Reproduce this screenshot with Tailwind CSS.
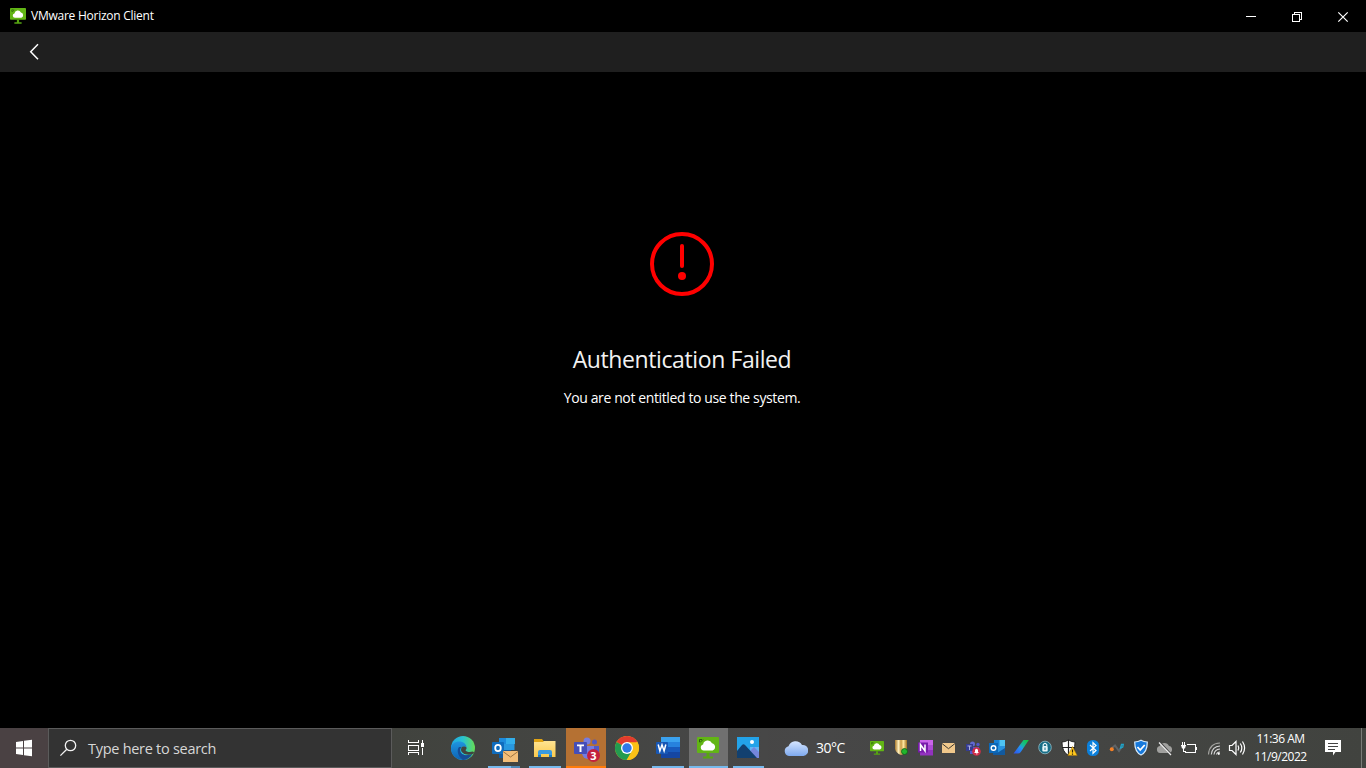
<!DOCTYPE html>
<html lang="en">
<head>
<meta charset="utf-8">
<title>VMware Horizon Client</title>
<script src="https://cdn.jsdelivr.net/npm/@tailwindcss/browser@4"></script>
</head>
<body class="flex h-screen w-screen flex-col overflow-hidden bg-black font-['Open_Sans','Noto_Sans',sans-serif] text-white">
<svg class="absolute size-0">
  <defs>
    <linearGradient id="edgeA" x1="0" y1="0" x2="1" y2="0"><stop offset="0" stop-color="#20a5e4"/><stop offset=".5" stop-color="#29c3d0"/><stop offset="1" stop-color="#66dc54"/></linearGradient>
    <linearGradient id="edgeB" x1="0" y1="0" x2="0" y2="1"><stop offset="0" stop-color="#1f95df"/><stop offset="1" stop-color="#0d62b4"/></linearGradient>
    <linearGradient id="folder" x1="0" y1="0" x2="0" y2="1"><stop offset="0" stop-color="#ffe493"/><stop offset="1" stop-color="#fbc94c"/></linearGradient>
    <linearGradient id="cloud" x1="0" y1="0" x2="0" y2="1"><stop offset="0" stop-color="#d5e5ff"/><stop offset="1" stop-color="#7ea9ee"/></linearGradient>
    <linearGradient id="pen" x1="1" y1="0" x2="0" y2="1"><stop offset="0" stop-color="#12c832"/><stop offset=".4" stop-color="#18b7a0"/><stop offset=".55" stop-color="#2494f4"/><stop offset="1" stop-color="#2f50ec"/></linearGradient>
    <linearGradient id="gold" x1="0" y1="0" x2="1" y2="0"><stop offset="0" stop-color="#a97a2d"/><stop offset=".3" stop-color="#fff0bd"/><stop offset=".5" stop-color="#c79a45"/><stop offset=".7" stop-color="#ffe6a0"/><stop offset="1" stop-color="#a0701f"/></linearGradient>
    <symbol id="horizon" viewBox="0 0 22 22">
      <path fill="#62b515" d="M1 0h20q1 0 1 1v14q0 1-1 1H1q-1 0-1-1V1q0-1 1-1z"/>
      <path fill="#57a512" d="M9.500 16h3v4h-3zM6 19.500h10v2H6z"/>
      <path fill="none" stroke="#28620b" d="M2.500 5V2.500H5M3 5.500l3-3"/>
      <path fill="#fff" d="M6.800 13.500a3.100 3.100 0 0 1-.7-6.100A4.700 4.700 0 0 1 15 6.200a3.800 3.800 0 0 1 .6 7.300z"/>
    </symbol>
  </defs>
</svg>

<header class="flex h-8 shrink-0 items-center">
  <svg class="ml-2.5 size-4" viewBox="0 0 22 22"><use href="#horizon"/></svg>
  <h1 class="ml-[5px] grow text-[12px] leading-4 tracking-[-0.25px] whitespace-nowrap">VMware Horizon Client</h1>
  <svg class="h-8 w-[138px]" viewBox="1228 0 138 32" fill="none" stroke="#fff">
    <path d="M1246 16.500h10M1292.500 14.500h7v7h-7zM1294.500 14v-1.500h7v7H1300" shape-rendering="crispEdges"/>
    <path d="M1338.300 12.300l9.400 9.400m0-9.400l-9.400 9.400" stroke-width="1.200"/>
  </svg>
</header>
<nav class="flex h-10 shrink-0 items-center bg-[#1f1f1f]">
  <svg class="ml-6 size-5" viewBox="24 42 20 20" fill="none" stroke="#fff" stroke-width="1.500"><path d="M38 44.300L30.700 51.700L38 59.200"/></svg>
</nav>

<main class="flex min-h-0 grow flex-col items-center pr-0.5 pt-40">
  <svg class="size-16 shrink-0" viewBox="0 0 64 64" fill="none" stroke="#f00" stroke-width="4"><circle cx="32" cy="32" r="30"/><path d="M32 14v20" stroke-linecap="round"/><circle cx="32" cy="44" r="4" fill="#f00" stroke="none"/></svg>
  <h2 class="mt-[47px] text-[23px] leading-8 tracking-[-0.4px] whitespace-nowrap text-[#f2f2f2]">Authentication Failed</h2>
  <p class="mt-[13px] text-[14px] leading-5 tracking-[-0.38px] whitespace-nowrap">You are not entitled to use the system.</p>
</main>

<footer class="flex h-10 shrink-0 bg-linear-to-r from-[#443e3f] via-[#474747] via-60% to-[#41433f]">
  <div class="w-12 shrink-0 bg-[#4a4143]">
    <svg class="h-10 w-12" viewBox="0 728 48 40" fill="#fff"><path d="M16 742l7-1v6.500h-7zM24 740.800l8-1v7.700h-8zM16 748.500h7v6.500l-7-1zM24 748.500h8v7.700l-8-1z"/></svg>
  </div>
  <div class="flex w-[344px] shrink-0 items-center border border-[#5b5b5b] bg-[#333]">
    <svg class="ml-[10px] size-5" viewBox="59 738 20 20" fill="none" stroke="#f2f2f2" stroke-width="1.300"><circle cx="70.500" cy="745.500" r="5.200"/><path d="M66.800 749.300l-6.400 6.300"/></svg>
    <span class="mt-0.5 ml-[9px] text-[14.500px] leading-5 tracking-[-0.28px] whitespace-nowrap text-[#d7d7d7]">Type here to search</span>
  </div>
  <div class="flex shrink-0 bg-linear-to-r from-[#41433e] to-[#474747]">
    <svg class="h-10 w-[51px]" viewBox="392 728 51 40" fill="none" stroke="#fff" shape-rendering="crispEdges"><path d="M408.500 740v2.500h10V740M408.500 755v-2.500h10v2.500M408.500 745.500h10v5h-10zM422.500 740v3M422.500 748v7"/><path fill="#fff" stroke="none" d="M421 743h3v4h-3z"/></svg>
    <svg class="h-10 w-[41px]" viewBox="443 728 41 40">
      <circle cx="463" cy="748" r="12" fill="url(#edgeA)"/>
      <path fill="url(#edgeB)" d="M451 748c.3-4 4.300-6.500 8-6.500 4.500 0 7.500 2.700 7.500 6-3-2.500-7 .2-6.300 3.500.7 4.300 7 5.500 12.300 2.800-2.500 4-6 6.200-10 6.200a11.800 11.800 0 0 1-11.500-12z"/>
      <path fill="#154d96" d="M459 747c-2.500 3-1.500 9 4 12.900 4-.1 7.300-2.300 9.500-6.100-5.300 2.700-11.600 1.500-12.300-2.800-.2-1.700.2-3 1.300-4z"/>
      <path fill="#42443f" d="M461.500 747.500c.7-1.300 3.700-1.500 5 0 .3 1-.3 2-1 2.700.7 1.700 4 2.300 7.500 1.300l1.500 1.500c-5 3.300-13.500 1.500-13.500-3.500z"/>
    </svg>
    <svg class="h-10 w-[41px]" viewBox="484 728 41 40">
      <path fill="#1674c4" d="M499 738h8v17h-8z"/><path fill="#33aeea" d="M506 738h9v6h-9z"/><path fill="#1d8bdc" d="M499 738h7v6h-7z"/><path fill="#2898df" d="M499 744h15.500v6H499z"/><path fill="#0f579c" d="M499 750h12v8h-12z"/>
      <rect x="492" y="742" width="12" height="12" rx="1" fill="#0f6cbd"/><ellipse cx="498" cy="748" rx="2.800" ry="3.200" fill="none" stroke="#fff" stroke-width="1.800"/>
      <path fill="#f2bd78" d="M503 751h15v11h-15z"/><path fill="none" stroke="#9e7440" d="M503 751.500l7.500 5.500 7.500-5.500"/>
      <path fill="#76b9ed" d="M488 766h23v2h-23z"/><path fill="#4f88b5" d="M511 766h9v2h-9z"/>
    </svg>
    <svg class="h-10 w-[41px]" viewBox="525 728 41 40">
      <path fill="#e2a414" d="M534 739h8l1.500 2H555v5h-21z"/><path fill="url(#folder)" d="M534 742h9l1-1h11.500v16H534z"/><path fill="#399be2" d="M538 757v-5q0-2 2-2h10q2 0 2 2v5h-3v-3h-8v3z"/><path fill="#1f7ac1" d="M538 755h3v2h-3zM549 755h3v2h-3z"/>
      <path fill="#76b9ed" d="M529 766h32v2h-32z"/>
    </svg>
    <svg class="h-10 w-[41px]" viewBox="566 728 41 40">
      <path fill="#b57133" d="M566 728h40v40h-40z"/><path fill="#ff7b0a" d="M566 766h40v2h-40z"/>
      <circle cx="587" cy="741" r="3.500" fill="#777ce0"/><circle cx="594.500" cy="742" r="2.500" fill="#5159c5"/><path fill="#5159c5" d="M592 746h7v8h-7z"/><path fill="#757be0" d="M582 746h12v7a6 6 0 0 1-12 0z"/>
      <rect x="574" y="742" width="13" height="12" rx="1" fill="#454eb8"/><path fill="#fff" d="M577 744.500h7v1.800h-2.500v5.700h-2v-5.700H577z"/>
      <circle cx="593.500" cy="755.500" r="6.500" fill="#c4203c"/><text x="593.500" y="759.500" font-size="11" font-weight="700" text-anchor="middle" fill="#fff">3</text>
    </svg>
    <svg class="h-10 w-[41px]" viewBox="607 728 41 40">
      <circle cx="627" cy="748" r="12" fill="#fbc116"/><path fill="#e33b2e" d="M627 748l-10.400-6A12 12 0 0 1 637.400 742z"/><path fill="#239b50" d="M627 748l-10.400-6A12 12 0 0 0 627 760l5-9z"/><path fill="#fbc116" d="M627 742.300h10.600A12 12 0 0 1 626.500 760l5.500-9z"/>
      <circle cx="627" cy="748" r="6" fill="#fff"/><circle cx="627" cy="748" r="4.700" fill="#2f78e8"/>
    </svg>
    <svg class="h-10 w-[41px]" viewBox="648 728 41 40">
      <path fill="#3ba2ef" d="M661 737h19v6h-19z"/><path fill="#2782de" d="M661 742h19v5h-19z"/><path fill="#185abd" d="M661 747h19v6h-19z"/><path fill="#1546a2" d="M661 752h19v6h-19z"/>
      <rect x="656" y="742" width="12" height="12" rx="1" fill="#1757b5"/><path fill="none" stroke="#fff" stroke-width="1.500" d="M658.200 744.500l1.700 6.500 2.100-6.200 2.100 6.200 1.700-6.500"/>
      <path fill="#76b9ed" d="M652 766h32v2h-32z"/>
    </svg>
    <div class="relative w-[39px] bg-[#707070]">
      <svg class="mt-[9px] ml-2 size-[22px]" viewBox="0 0 22 22"><use href="#horizon"/></svg>
      <i class="absolute inset-x-0 bottom-0 h-0.5 bg-[#76b9ed]"></i>
    </div>
    <svg class="h-10 w-10" viewBox="728 728 40 40">
      <path fill="#23a3e9" d="M737 737h22v21h-22z"/><path fill="#65b4f4" d="M750 747h9v10h-9z"/><path fill="#7486dc" d="M750 751l4-4 5 5v6h-9z"/><path fill="#12406f" d="M737 751l5-6q1.500-1.500 3 0l12 13h-20z"/><circle cx="752" cy="742" r="2" fill="#fff"/>
      <path fill="#76b9ed" d="M733 766h31v2h-31z"/>
    </svg>
  </div>
  <div class="flex w-[97px] shrink-0 items-center pl-4">
    <svg class="size-6" viewBox="784 736 24 24"><path fill="url(#cloud)" d="M789 756a5 5 0 0 1-.5-9.800A7.500 7.500 0 0 1 802 745a5.500 5.500 0 0 1 1.500 11z"/></svg>
    <span class="ml-2 text-[14px] leading-5 tracking-[-0.5px] whitespace-nowrap">30°C</span>
  </div>
  <div class="flex shrink-0 items-center">
    <span class="flex size-6 items-center justify-center"><svg class="size-[14px]" viewBox="0 0 22 22"><use href="#horizon"/></svg></span>
    <svg class="size-6" viewBox="889 736 24 24"><path fill="url(#gold)" d="M895 740h12v9q-1 4-6 6-5-2-6-6z"/><circle cx="904.500" cy="751.500" r="3" fill="#22b52d" stroke="#0b6214" stroke-width=".8"/></svg>
    <svg class="size-6" viewBox="913 736 24 24"><path fill="#ca64ea" d="M920 740h13v5h-13z"/><path fill="#ae4bd5" d="M920 745h13v5h-13z"/><path fill="#9332bf" d="M920 750h13v5.500h-13z"/><path fill="#7719aa" d="M918 742.500h10v10h-10z"/><path fill="none" stroke="#fff" stroke-width="1.500" d="M920.500 751v-6.300l4.500 6.300v-6.500"/></svg>
    <svg class="size-6" viewBox="937 736 24 24"><path fill="#f0c88b" d="M942 743h13v10h-13z"/><path fill="none" stroke="#3e3930" d="M942 743.500l6.500 5.200 6.500-5.200"/></svg>
    <svg class="size-6" viewBox="961 736 24 24"><circle cx="972.500" cy="744" r="2.500" fill="#6068cf"/><circle cx="978" cy="744.500" r="1.700" fill="#5059c9"/><path fill="#5059c9" d="M970 747h9v7h-9z"/><path fill="#343b91" d="M966 744h7v7h-7z"/><path fill="none" stroke="#aaaee4" d="M967.500 746h4m-2 0v4"/><circle cx="976.500" cy="751.500" r="4.300" fill="#cf2d48"/><path fill="#fff" d="M974 753l1-1v-2q1.500-2.500 3 0v2l1 1zM976 753.500h1.500v.7H976z"/></svg>
    <svg class="size-6" viewBox="985 736 24 24"><path fill="#187fd3" d="M994 740h11v11h-11z"/><path fill="#4ec4f3" d="M999.500 740h5.500v6h-5.500z"/><path fill="#2893e0" d="M994 746h11v9h-11z"/><path fill="#125a9f" d="M993 749l6 6h-6zM1005 748v7h-11z"/><path fill="#0b67b7" d="M989 743h9v10h-9z"/><circle cx="993.500" cy="748" r="2.300" fill="none" stroke="#fff" stroke-width="1.400"/></svg>
    <svg class="size-6" viewBox="1009 736 24 24"><path fill="url(#pen)" d="M1023.500 740h5.300l-8 12q-1.200 1.500-3 1.500h-4.300z"/></svg>
    <svg class="size-6" viewBox="1033 736 24 24"><circle cx="1045" cy="747.500" r="6.300" fill="#176e87" stroke="#90bbc6" stroke-width=".8"/><rect x="1042.300" y="746" width="5.400" height="5.500" rx="1" fill="#e6f5f8"/><path fill="none" stroke="#e6f5f8" stroke-width="1.200" d="M1043.200 746v-1.200q1.800-3 3.600 0v1.200"/><path stroke="#176e87" d="M1045 747.500v2.500"/></svg>
    <svg class="size-6" viewBox="1057 736 24 24"><path fill="#fff" stroke="#111" stroke-width=".8" d="M1062 742q4 0 6.500-2.200 2.500 2.200 6.500 2.200 0 10-6.500 13.500Q1062 752 1062 742z"/><path fill="none" stroke="#222" stroke-width="1.200" d="M1068.500 740v15M1062 747.500h13"/><path fill="#ffc91e" stroke="#9e6d0b" stroke-width=".5" d="M1072.500 746.500l4.700 9h-9.400z"/><path stroke="#2c2410" stroke-width="1.200" d="M1072.500 749.500v3m0 1v1.200"/></svg>
    <svg class="size-6" viewBox="1081 736 24 24"><rect x="1087" y="740" width="12" height="16" rx="5.500" fill="#0b80dc"/><path fill="none" stroke="#fff" stroke-width="1.200" d="M1090 745l6 5.500-3 2.800v-10.600l3 2.800-6 5.500"/></svg>
    <svg class="size-6" viewBox="1105 736 24 24" fill="none"><path stroke="#5f6366" stroke-width="2" d="M1112 748l3-2.500 4 5.500 3-4.500"/><path stroke="#1fa3c9" stroke-width="1.300" d="M1120.500 748l1-3.500h1.800l-.5 2.500z"/><circle cx="1111.800" cy="749.300" r="2" fill="#f58025"/></svg>
    <svg class="size-6" viewBox="1129 736 24 24"><path fill="#1679dc" stroke="#d5eafc" stroke-width="1.200" d="M1134.700 742q3.500 0 6.300-1.700 2.800 1.700 6.300 1.700 0 10-6.300 13-6.300-3-6.300-13z"/><path fill="none" stroke="#fff" stroke-width="1.800" d="M1137.500 747l2.700 3 4.500-5"/></svg>
    <svg class="size-6" viewBox="1153 736 24 24"><path fill="#a0a09e" d="M1160 753a3.500 3.500 0 0 1-.3-6.900A5 5 0 0 1 1169 746a3.600 3.600 0 0 1 .5 7z"/><path stroke="#444" stroke-width="2" d="M1159 741.500l12 13"/><path stroke="#eee" stroke-width="1.200" d="M1159 742.500l12 12.500"/></svg>
    <svg class="size-6" viewBox="1177 736 24 24" fill="none" stroke="#fff"><path shape-rendering="crispEdges" d="M1187 744.500h8.500v8h-10v-2M1196.500 747v3M1181 745.500h5M1182.500 742v3M1184.500 742v3M1183.500 748v3.500h2"/><path fill="#fff" stroke="none" d="M1181 745h5l-1 3.500h-3z"/></svg>
    <svg class="size-6" viewBox="1201 736 24 24" fill="none" stroke="#d8d8d8" stroke-width="1.100"><path stroke="#a5a5a2" d="M1208.500 754.500Q1209 743.500 1220 743"/><path d="M1211.300 754.500q.7-7.800 8.700-8.500M1214 754.500q.5-5 6-5.500M1216.500 754.500q.5-2.300 3.500-2.500"/><circle cx="1218.800" cy="753.800" r="1.100" fill="#fff" stroke="none"/></svg>
    <svg class="size-6" viewBox="1225 736 24 24" fill="none" stroke="#fff" stroke-width="1.200"><path d="M1229.500 745.500h2.500l4-4v13l-4-4h-2.500zM1238 745.500q1.500 2.500 0 5M1240.300 743.500q3 4.500 0 9M1242.500 741.500q4.200 6.500 0 13"/></svg>
  </div>
  <div class="flex shrink-0 grow justify-between">
    <time class="ml-px w-[61px] pt-[2px] text-center text-[12px] leading-[18px] tracking-[-0.500px] whitespace-nowrap">11:36 AM<br>11/9/2022</time>
    <svg class="h-10 w-[55px] shrink-0" viewBox="1311 728 55 40"><path fill="#fff" d="M1325 740h16v12h-5.500l-2.500 3.500v-3.500h-8z"/><path stroke="#444" d="M1328 743.500h10M1328 746.500h10M1328 749.500h7"/><path stroke="#797b77" d="M1361.500 728v40"/></svg>
  </div>
</footer>
</body>
</html>
